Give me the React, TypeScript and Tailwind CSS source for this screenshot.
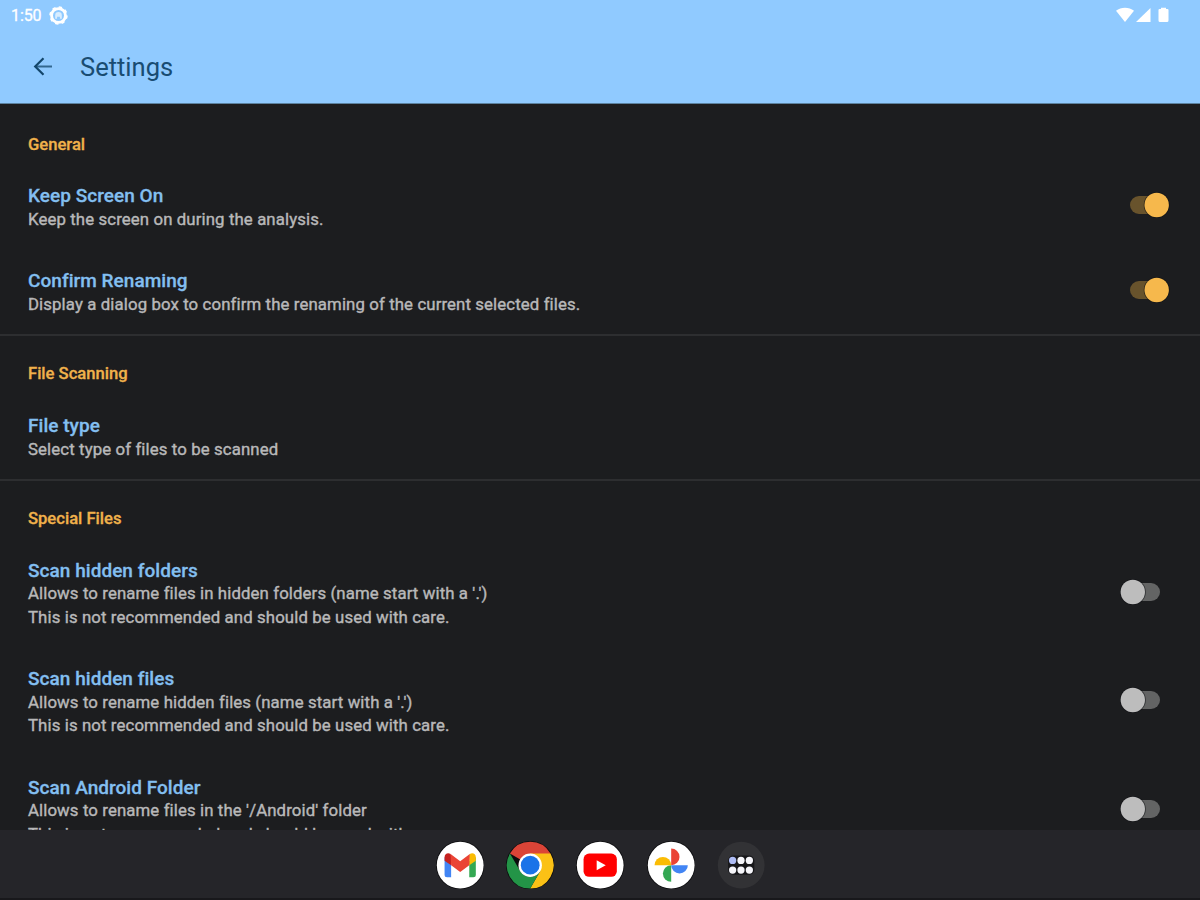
import type { ReactNode } from "react";

function Toggle({ on = false }: { on?: boolean }) {
  return (
    <svg className="-mt-[5px] h-[26px] w-[50px] shrink-0" viewBox="0 0 50 26" role="switch" aria-checked={on}>
      <rect x="10" y="4" width="30" height="18" rx="9" fill={on ? "#68532c" : "#636464"} />
      <circle cx={on ? 36.7 : 12.8} cy="13" r="13" fill="#0d0f12" opacity=".6" />
      <circle cx={on ? 36.7 : 12.8} cy="13" r="12.2" fill={on ? "#f6b84c" : "#bdbdbd"} />
    </svg>
  );
}

function SectionTitle({ children }: { children: ReactNode }) {
  return (
    <h2 className="flex h-[60px] items-end pb-[9px] text-[16.6px] leading-6 font-medium text-[#f0b14b] [-webkit-text-stroke:0.3px]">
      {children}
    </h2>
  );
}

function Row({ title, lines, toggle }: { title: string; lines: string[]; toggle?: boolean }) {
  return (
    <div className="flex items-center justify-between py-[18.8px]">
      <div>
        <h3 className="text-[19px] leading-[23.7px] font-medium tracking-[0.04px] text-[#83bff0] [-webkit-text-stroke:0.3px]">{title}</h3>
        {lines.map((line) => (
          <p key={line} className="text-[16.8px] leading-[23.6px] tracking-[0.11px] whitespace-nowrap text-[#b8b8b9] [-webkit-text-stroke:0.4px]">
            {line}
          </p>
        ))}
      </div>
      {toggle !== undefined && <Toggle on={toggle} />}
    </div>
  );
}

function Section({ title, children, last = false }: { title: string; children: ReactNode; last?: boolean }) {
  return (
    <section className={last ? "pr-[30px] pl-7" : "-mb-px border-b-2 border-[#2d2e30] pr-[30px] pl-7"}>
      <SectionTitle>{title}</SectionTitle>
      <div className="-mb-[1.2px]">{children}</div>
    </section>
  );
}

function Dock() {
  return (
    <nav className="flex h-[70px] shrink-0 justify-center gap-[22px] border-b-2 border-[#18181b] bg-[#252529] pt-[11px] pl-px">
      <svg className="size-[48.4px]" viewBox="0 0 48 48">
        <circle cx="24" cy="24" r="24" fill="#0c0c0e" />
        <circle cx="24" cy="24" r="23.2" fill="#fff" />
        <path d="M8.500 16v17.500q0 2.500 2.500 2.500h4V20z" fill="#4285f4" />
        <path d="M33 20v16h4q2.500 0 2.500-2.500V16z" fill="#34a853" />
        <path d="M33 14.500v9.500l6.500-4.500V16c0-3.300-3.400-4.800-6-3z" fill="#fbbc04" />
        <path d="M15 14.500v9.500l-6.500-4.500V16c0-3.300 3.400-4.800 6-3z" fill="#c5221f" />
        <path d="M14.500 13l9.500 7.200 9.500-7.200-.500 11-9 6.700L15 24z" fill="#ea4335" />
      </svg>
      <svg className="size-[48.4px]" viewBox="0 0 48 48">
        <circle cx="24" cy="24" r="24" fill="#0c0c0e" />
        <path d="M24 24L3.900 12.400A23.200 23.200 0 0 1 44.100 12.400z" fill="#db4437" />
        <path d="M24 12.400h20.100A23.200 23.200 0 0 1 24 47.200l10-17.400z" fill="#fbc116" />
        <path d="M3.900 12.400L14 29.800a11.600 11.600 0 0 0 20 0L24 47.200A23.200 23.200 0 0 1 3.900 12.400z" fill="#239447" />
        <circle cx="24" cy="24" r="11.600" fill="#fff" />
        <circle cx="24" cy="24" r="9.300" fill="#1a73e8" />
      </svg>
      <svg className="size-[48.4px]" viewBox="0 0 48 48">
        <circle cx="24" cy="24" r="24" fill="#0c0c0e" />
        <circle cx="24" cy="24" r="23.200" fill="#fff" />
        <rect x="7.500" y="12.500" width="33" height="23" rx="5.500" fill="#f00" />
        <path d="M20.500 19v10l9-5z" fill="#fff" />
      </svg>
      <svg className="size-[48.4px]" viewBox="0 0 48 48">
        <circle cx="24" cy="24" r="24" fill="#0c0c0e" />
        <circle cx="24" cy="24" r="23.200" fill="#fff" />
        <path d="M24 7.500a8.200 8.200 0 0 1 0 16.500z" fill="#ea4335" />
        <path d="M40.500 24a8.200 8.200 0 0 1-16.500 0z" fill="#4285f4" />
        <path d="M24 40.500a8.200 8.200 0 0 1 0-16.500z" fill="#34a853" />
        <path d="M7.500 24a8.200 8.200 0 0 1 16.500 0z" fill="#fbbc04" />
      </svg>
      <svg className="size-[48.4px]" viewBox="0 0 48 48">
        <circle cx="24" cy="24" r="23.200" fill="#323235" />
        <rect x="11" y="14.500" width="26" height="19" rx="5" fill="#17171a" />
        <g fill="#f5f5fa">
          <circle cx="15.500" cy="19.300" r="3.600" fill="#aebcf5" />
          <circle cx="23.800" cy="19.300" r="3.600" />
          <circle cx="32.100" cy="19.300" r="3.600" />
          <circle cx="15.500" cy="28.800" r="3.600" />
          <circle cx="23.800" cy="28.800" r="3.600" />
          <circle cx="32.100" cy="28.800" r="3.600" />
        </g>
      </svg>
    </nav>
  );
}

export default function App() {
  return (
    <div className="flex h-[900px] w-[1200px] flex-col overflow-hidden bg-[#1c1d1f] font-['Roboto',sans-serif]">
      <header className="h-[104px] shrink-0 border-b border-[#5c829f] bg-[#90caff]">
        <div className="flex h-[30px] items-center justify-between pr-[30px] pl-[11px] text-white">
          <div className="flex items-center gap-[7px]">
            <span className="w-[31px] pt-0.5 text-[16px] leading-5 tracking-[-0.1px] [-webkit-text-stroke:0.3px]">1:50</span>
            <svg className="size-[19px]" viewBox="0 0 20 20">
              <circle cx="10" cy="10" r="7.300" fill="none" stroke="#fff" strokeWidth="3" />
              <circle cx="10" cy="10" r="8.900" fill="none" stroke="#fff" strokeWidth="1.600" strokeDasharray="3.500 3.490" />
              <path d="M6.500 13.500V9.800a3.500 3.500 0 0 1 7 0v3.700h-2v-2.300h-3v2.300z" fill="#fff" opacity=".65" />
            </svg>
          </div>
          <svg className="h-4 w-[54px]" viewBox="0 0 54 16" fill="#fff">
            <path d="M0 3.800C5-.3 13-.3 18 3.800L9 15z" />
            <path d="M34.500 1v14H20z" />
            <path d="M42.500 3q0-1 1-1H45V.800h5V2h1.500q1 0 1 1v10.500q0 1.500-1.500 1.500h-7q-1.500 0-1.500-1.500z" />
          </svg>
        </div>
        <div className="flex h-[74px] items-center pl-[33px]">
          <svg className="-mt-0.5 h-[19px] w-5 text-[#13466b]" viewBox="0 0 20 19" fill="none" stroke="currentColor">
            <path d="M19 9.500H2.500" strokeWidth="2" opacity=".75" />
            <path d="M10.500 1.200L2.200 9.500l8.300 8.300" strokeWidth="2.200" />
          </svg>
          <h1 className="ml-[27px] text-[25.5px] leading-8 text-[#194c72]">Settings</h1>
        </div>
      </header>
      <main className="min-h-0 flex-1 overflow-hidden pt-[1.5px]">
        <Section title="General">
          <Row title="Keep Screen On" lines={["Keep the screen on during the analysis."]} toggle={true} />
          <Row title="Confirm Renaming" lines={["Display a dialog box to confirm the renaming of the current selected files."]} toggle={true} />
        </Section>
        <Section title="File Scanning">
          <Row title="File type" lines={["Select type of files to be scanned"]} />
        </Section>
        <Section title="Special Files" last>
          <Row title="Scan hidden folders" lines={["Allows to rename files in hidden folders (name start with a '.')", "This is not recommended and should be used with care."]} toggle={false} />
          <Row title="Scan hidden files" lines={["Allows to rename hidden files (name start with a '.')", "This is not recommended and should be used with care."]} toggle={false} />
          <Row title="Scan Android Folder" lines={["Allows to rename files in the '/Android' folder", "This is not recommended and should be used with care."]} toggle={false} />
        </Section>
      </main>
      <Dock />
    </div>
  );
}
